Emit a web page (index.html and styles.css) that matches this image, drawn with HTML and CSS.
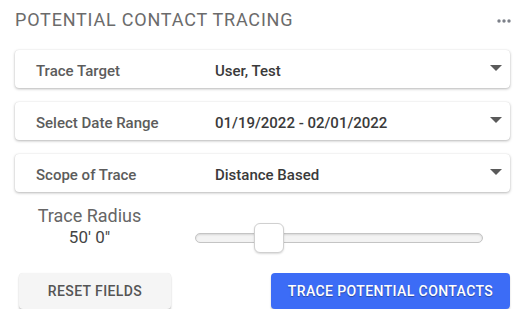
FILE: index.html
```html
<!doctype html>
<html lang="en">
  <head>
    <meta charset="UTF-8" />
    <title>Potential Contact Tracing</title>
    <link rel="stylesheet" href="styles.css">
  </head>
  <body>
    <div class="panel">
      <div class="panel-header">
        <h2 class="panel-title">Potential Contact Tracing</h2>
        <svg class="more-icon" width="14" height="4" viewBox="0 0 14 4">
          <circle cx="2" cy="2" r="1.7" />
          <circle cx="7" cy="2" r="1.7" />
          <circle cx="12" cy="2" r="1.7" />
        </svg>
      </div>

      <div class="select-card">
        <span class="select-label">Trace Target</span>
        <span class="select-value">User, Test</span>
        <span class="caret"></span>
      </div>

      <div class="select-card">
        <span class="select-label">Select Date Range</span>
        <span class="select-value">01/19/2022 - 02/01/2022</span>
        <span class="caret"></span>
      </div>

      <div class="select-card">
        <span class="select-label">Scope of Trace</span>
        <span class="select-value">Distance Based</span>
        <span class="caret"></span>
      </div>

      <div class="radius-row">
        <div class="radius-label">
          <div class="radius-title">Trace Radius</div>
          <div class="radius-value">50' 0"</div>
        </div>
        <div class="slider">
          <div class="slider-track"></div>
          <div class="slider-thumb"></div>
        </div>
      </div>

      <div class="actions">
        <button class="btn btn-reset">Reset Fields</button>
        <button class="btn btn-primary">Trace Potential Contacts</button>
      </div>
    </div>
  </body>
</html>
```

FILE: styles.css
```css
body {
  margin: 0;
  font-family: Roboto, "Liberation Sans", sans-serif;
  background: white;
}

.panel {
  width: 527px;
  padding: 8px 17px 0 15px;
  box-sizing: border-box;
}

.panel-header {
  display: flex;
  justify-content: space-between;
  align-items: center;
  height: 24px;
}

.panel-title {
  margin: 0;
  font-size: 18px;
  line-height: 24px;
  font-weight: 400;
  letter-spacing: 0.8px;
  text-transform: uppercase;
  color: #6b6b6b;
}

.more-icon {
  fill: #7c8089;
  margin-right: -1px;
  margin-top: 2px;
}

.select-card {
  display: flex;
  align-items: center;
  height: 38px;
  margin-top: 14px;
  padding: 4px 8px 0 21px;
  box-sizing: border-box;
  border-radius: 4px;
  background: white;
  box-shadow: 0 1px 3px rgba(0, 0, 0, 0.28), 0 0 1px rgba(0, 0, 0, 0.12);
  font-size: 15px;
  font-weight: 500;
}

.panel-header + .select-card {
  margin-top: 18px;
}

.select-label {
  width: 179px;
  color: #5c5c5c;
}

.select-value {
  flex: 1;
  color: #3a3a3a;
}

.caret {
  width: 0;
  height: 0;
  margin-top: -6px;
  border-left: 6px solid transparent;
  border-right: 6px solid transparent;
  border-top: 6px solid #5a5a5a;
}

.radius-row {
  display: flex;
  margin-top: 13px;
}

.radius-label {
  width: 149px;
  text-align: center;
}

.radius-title {
  font-size: 18px;
  line-height: 22px;
  color: #666;
}

.radius-value {
  font-size: 17px;
  line-height: 20px;
  color: #444;
}

.slider {
  position: relative;
  width: 288px;
  height: 30px;
  margin: 18px 0 0 31px;
}

.slider-track {
  position: absolute;
  left: 0;
  right: 0;
  top: 10px;
  height: 10px;
  box-sizing: border-box;
  border: 1px solid #c4c4c4;
  border-radius: 5px;
  background: #f3f3f3;
  box-shadow: inset 0 1px 2px rgba(0, 0, 0, 0.12);
}

.slider-thumb {
  position: absolute;
  left: 59px;
  top: 0;
  width: 30px;
  height: 30px;
  box-sizing: border-box;
  border: 1px solid #d0d0d0;
  border-radius: 6px;
  background: white;
  box-shadow: 0 1px 2px rgba(0, 0, 0, 0.15);
}

.actions {
  display: flex;
  justify-content: space-between;
  margin-top: 20px;
  padding-left: 4px;
}

.btn {
  height: 36px;
  border: none;
  border-radius: 4px;
  font-family: Roboto, "Liberation Sans", sans-serif;
  font-size: 14px;
  font-weight: 500;
  letter-spacing: 0.4px;
  text-transform: uppercase;
  cursor: pointer;
}

.btn-reset {
  width: 152px;
  background: #f5f5f5;
  color: #555;
  box-shadow: 0 2px 2px rgba(0, 0, 0, 0.22), 0 0 1px rgba(0, 0, 0, 0.1);
}

.btn-primary {
  width: 239px;
  background: #3c6cf6;
  color: white;
  text-shadow: 0 1px 1px rgba(0, 0, 0, 0.35);
  box-shadow: 0 2px 2px rgba(0, 0, 0, 0.2);
}
```
